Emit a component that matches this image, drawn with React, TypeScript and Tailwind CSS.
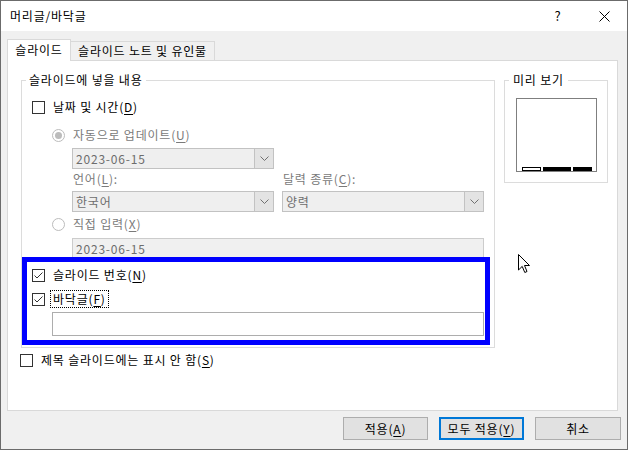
import * as React from 'react';

// 체크박스
const CheckBox: React.FC<{ checked?: boolean }> = ({ checked = false }) => (
  <span className="w-[13px] h-[13px] shrink-0 border border-[#333333] bg-white flex items-center justify-center">
    {checked && (
      <svg width="11" height="11" viewBox="0 0 11 11">
        <polyline points="1.5,5.5 4,8 9.5,2.5" fill="none" stroke="#333333" strokeWidth="1" />
      </svg>
    )}
  </span>
);

// 라디오 버튼 (비활성)
const Radio: React.FC<{ checked?: boolean }> = ({ checked = false }) => (
  <span className="w-[13px] h-[13px] shrink-0 rounded-full border border-[#bcbcbc] bg-white flex items-center justify-center">
    {checked && <span className="w-[7px] h-[7px] rounded-full bg-[#bcbcbc]" />}
  </span>
);

const Chevron = () => (
  <svg width="9" height="5" viewBox="0 0 9 5">
    <polyline points="0.5,0.5 4.5,4.5 8.5,0.5" fill="none" stroke="#707070" strokeWidth="1" />
  </svg>
);

// 비활성 콤보 상자
const Combo: React.FC<{ value: string; className?: string }> = ({ value, className = '' }) => (
  <div className={`h-[21px] border border-[#c2c2c2] bg-[#efefef] flex ${className}`}>
    <span className="flex-1 pl-[3px] flex items-center text-[#6d6d6d]">{value}</span>
    <span className="w-[19px] border-l border-[#c2c2c2] bg-[#e3e3e3] flex items-center justify-center">
      <Chevron />
    </span>
  </div>
);

const Mn: React.FC<{ k: string }> = ({ k }) => <span className="underline underline-offset-2">{k}</span>;

export default function App() {
  return (
    <div className="relative w-[628px] h-[450px] border border-[#6b6b6b] bg-[#f0f0f0] flex flex-col overflow-hidden font-['Noto_Sans_CJK_KR','Noto_Sans',sans-serif] text-[12px] leading-[16px] tracking-[0.8px] text-black">
      {/* 제목 표시줄 */}
      <div className="h-[30px] shrink-0 bg-white flex items-center">
        <span className="flex-1 pl-[9px]">머리글/바닥글</span>
        <div className="w-[46px] h-full flex items-center justify-center text-[13px]">?</div>
        <div className="w-[46px] h-full flex items-center justify-center">
          <svg width="11" height="11" viewBox="0 0 11 11">
            <line x1="0.5" y1="0.5" x2="10.5" y2="10.5" stroke="#000" strokeWidth="1" />
            <line x1="10.5" y1="0.5" x2="0.5" y2="10.5" stroke="#000" strokeWidth="1" />
          </svg>
        </div>
      </div>

      <div className="flex-1 pt-[8px] pl-[6px] flex flex-col">
        {/* 탭 */}
        <div className="relative z-10 h-[22px] -mb-px flex items-end">
          <div className="w-[64px] h-[22px] border border-b-0 border-[#d9d9d9] bg-white flex items-center justify-center pb-[1px]">
            슬라이드
          </div>
          <div className="w-[144px] h-[20px] border-t border-r border-b border-[#d9d9d9] bg-[#f0f0f0] flex items-center justify-center">
            슬라이드 노트 및 유인물
          </div>
        </div>

        {/* 탭 패널 */}
        <div className="w-[611px] h-[351px] border border-[#d9d9d9] bg-white pt-[19px] pl-[13px] flex items-start">
          <div className="w-[474px] flex flex-col">
            <div className="w-[474px] h-[268px] border border-[#dcdcdc] flex flex-col">
              <span className="-mt-[9px] ml-[4px] px-[3px] w-fit bg-white">슬라이드에 넣을 내용</span>

              <div className="mt-[10px] h-[18px] pl-[10px] flex items-center gap-[8px]">
                <CheckBox />
                <span>날짜 및 시간(<Mn k="D" />)</span>
              </div>

              <div className="mt-[10px] h-[18px] pl-[30px] flex items-center gap-[8px] text-[#7a7a7a]">
                <Radio checked />
                <span>자동으로 업데이트(<Mn k="U" />)</span>
              </div>

              <Combo value="2023-06-15" className="mt-[4px] ml-[50px] w-[202px]" />

              <div className="mt-[2px] h-[16px] pl-[51px] flex text-[#7a7a7a]">
                <span className="w-[210px]">언어(<Mn k="L" />):</span>
                <span>달력 종류(<Mn k="C" />):</span>
              </div>

              <div className="mt-[4px] pl-[50px] flex gap-[8px]">
                <Combo value="한국어" className="w-[202px]" />
                <Combo value="양력" className="w-[202px]" />
              </div>

              <div className="mt-[3px] h-[18px] pl-[30px] flex items-center gap-[8px] text-[#7a7a7a]">
                <Radio />
                <span>직접 입력(<Mn k="X" />)</span>
              </div>

              <div className="mt-[5px] ml-[50px] w-[412px] h-[21px] border border-[#cccccc] bg-[#f0f0f0] pl-[3px] flex items-center text-[#6d6d6d]">
                2023-06-15
              </div>

              {/* 강조 표시된 영역 */}
              <div className="-mt-[2px] w-[468px] h-[88px] border-[5px] border-[#0000ff] pt-[4px] flex flex-col">
                <div className="h-[18px] pl-[5px] flex items-center gap-[8px]">
                  <CheckBox checked />
                  <span>슬라이드 번호(<Mn k="N" />)</span>
                </div>
                <div className="mt-[6px] h-[18px] pl-[5px] flex items-center">
                  <CheckBox checked />
                  <span className="ml-[5px] h-[18px] px-[2px] border border-dotted border-black flex items-center">
                    바닥글(<Mn k="F" />)
                  </span>
                </div>
                <div className="mt-[4px] ml-[25px] w-[432px] h-[24px] border border-[#adadad] bg-white" />
              </div>
            </div>

            <div className="mt-[3px] h-[18px] -ml-px flex items-center gap-[8px]">
              <CheckBox />
              <span>제목 슬라이드에는 표시 안 함(<Mn k="S" />)</span>
            </div>
          </div>

          {/* 미리 보기 */}
          <div className="ml-[9px] w-[104px] border border-[#dcdcdc] pb-[10px] flex flex-col">
            <span className="-mt-[9px] ml-[4px] px-[4px] w-fit bg-white">미리 보기</span>
            <div className="mt-[10px] ml-[11px] w-[81px] h-[74px] border border-[#7f7f7f] bg-white pl-[5px] flex items-end gap-[2px]">
              <span className="w-[19px] h-[4px] border border-black bg-white" />
              <span className="w-[28px] h-[4px] bg-black" />
              <span className="w-[19px] h-[4px] bg-black" />
            </div>
          </div>
        </div>

        {/* 버튼 */}
        <div className="mt-[6px] pr-[6px] flex justify-end gap-[11px]">
          <button className="w-[85px] h-[23px] border border-[#adadad] bg-[#e1e1e1] flex items-center justify-center">
            적용(<Mn k="A" />)
          </button>
          <button className="w-[85px] h-[23px] border-2 border-[#0078d7] bg-[#e1e1e1] flex items-center justify-center">
            모두 적용(<Mn k="Y" />)
          </button>
          <button className="w-[86px] h-[23px] border border-[#adadad] bg-[#e1e1e1] flex items-center justify-center">
            취소
          </button>
        </div>
      </div>

      {/* 마우스 포인터 */}
      <svg className="absolute left-[517px] top-[253px]" width="13" height="20" viewBox="0 0 13 20">
        <path d="M0.5,0.5 L0.5,16 L4.2,12.4 L6.8,18.5 L9,17.5 L6.5,11.5 L11.5,11.5 Z" fill="#fff" stroke="#000" strokeWidth="1" />
      </svg>
    </div>
  );
}
